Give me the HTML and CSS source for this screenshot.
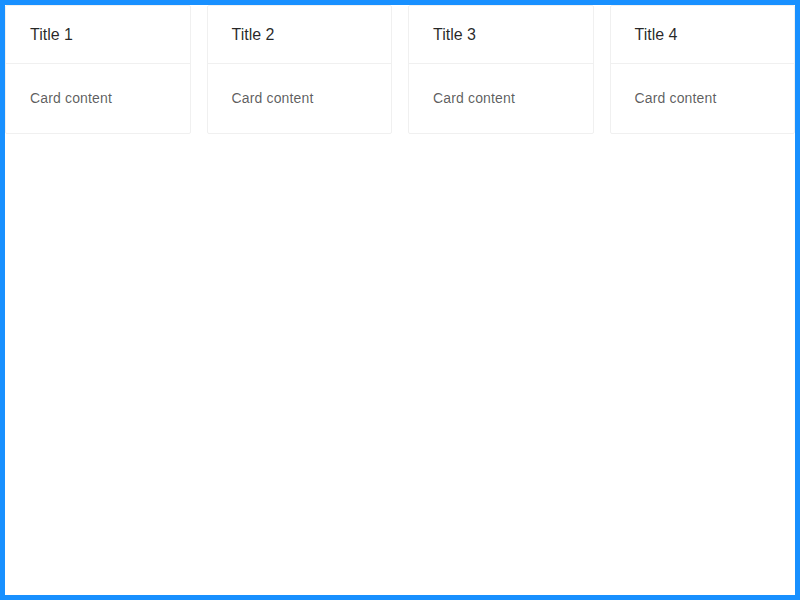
FILE: index.html
```html
<!DOCTYPE html>
<html>
<head>
<meta charset="utf-8">
<link rel="stylesheet" href="styles.css">
</head>
<body>
<div class="frame">
  <div class="grid">
    <div class="card">
      <div class="card-head">Title 1</div>
      <div class="card-body">Card content</div>
    </div>
    <div class="card">
      <div class="card-head">Title 2</div>
      <div class="card-body">Card content</div>
    </div>
    <div class="card">
      <div class="card-head">Title 3</div>
      <div class="card-body">Card content</div>
    </div>
    <div class="card">
      <div class="card-head">Title 4</div>
      <div class="card-body">Card content</div>
    </div>
  </div>
</div>
</body>
</html>
```
FILE: styles.css
```css
html, body {
  margin: 0;
  padding: 0;
  background: #fff;
}
body {
  font-family: "Liberation Sans", Arial, sans-serif;
  font-size: 14px;
  line-height: 1.5;
  color: rgba(0, 0, 0, 0.85);
}
.frame {
  box-sizing: border-box;
  width: 800px;
  height: 600px;
  border: 5px solid #1890ff;
  overflow: hidden;
}
.grid {
  display: grid;
  grid-template-columns: repeat(4, 1fr);
  column-gap: 16px;
  align-items: start;
}
.card {
  background: #fff;
  border: 1px solid #f0f0f0;
  border-radius: 2px;
}
.card-head {
  padding: 16px 24px;
  font-size: 16px;
  line-height: 1.5715;
  color: rgba(0, 0, 0, 0.85);
  border-bottom: 1px solid #f0f0f0;
}
.card-body {
  padding: 24px;
  font-size: 14px;
  line-height: 1.5;
  letter-spacing: 0.15px;
  color: rgba(0, 0, 0, 0.65);
}
```
